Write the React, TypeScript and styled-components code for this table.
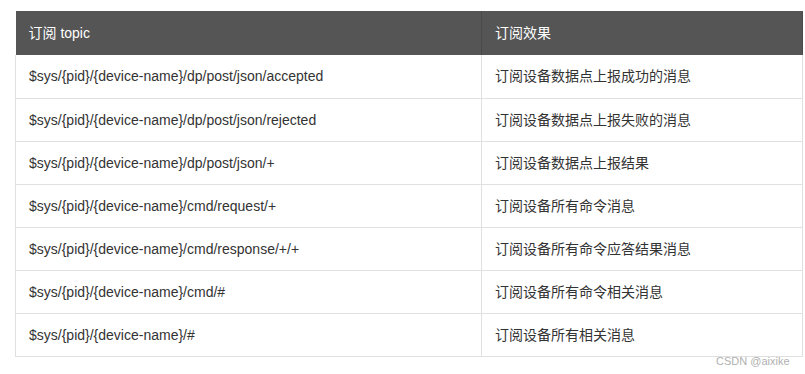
import styled, {createGlobalStyle} from "styled-components";

const GlobalStyle = createGlobalStyle`
  body {
    margin: 0;
    background: #fff;
    font-family: "Liberation Sans", "Noto Sans CJK SC", sans-serif;
  }
`;

const Page = styled.div`
  position: relative;
  padding: 11px 0 0 15px;
  height: 374px;
  box-sizing: border-box;
`;

const Table = styled.table`
  width: 788px;
  border-collapse: collapse;
  table-layout: fixed;
  font-size: 14px;
  line-height: 20px;
`;

const HeadCell = styled.th<{ $w?: number }>`
  width: ${props => props.$w ? `${props.$w}px` : "auto"};
  height: 44px;
  padding: 0 13px;
  box-sizing: border-box;
  background: #555555;
  color: #ffffff;
  font-weight: normal;
  text-align: left;
  border-right: 1px solid #4a4a4a;
`;

const Row = styled.tr`
  border-bottom: 1px solid #e0e0e0;
`;

const Cell = styled.td`
  height: 43px;
  padding: 0 13px;
  box-sizing: border-box;
  color: #333333;
  border-left: 1px solid #e0e0e0;
  border-right: 1px solid #e0e0e0;
  white-space: nowrap;
`;

const Watermark = styled.span`
  position: absolute;
  left: 716px;
  top: 355px;
  font-size: 11px;
  color: #b0b0b0;
  font-family: "Liberation Sans", sans-serif;
`;

interface ITopic {
    topic: string,
    effect: string,
}

const topics: ITopic[] = [
    {topic: "$sys/{pid}/{device-name}/dp/post/json/accepted", effect: "订阅设备数据点上报成功的消息"},
    {topic: "$sys/{pid}/{device-name}/dp/post/json/rejected", effect: "订阅设备数据点上报失败的消息"},
    {topic: "$sys/{pid}/{device-name}/dp/post/json/+", effect: "订阅设备数据点上报结果"},
    {topic: "$sys/{pid}/{device-name}/cmd/request/+", effect: "订阅设备所有命令消息"},
    {topic: "$sys/{pid}/{device-name}/cmd/response/+/+", effect: "订阅设备所有命令应答结果消息"},
    {topic: "$sys/{pid}/{device-name}/cmd/#", effect: "订阅设备所有命令相关消息"},
    {topic: "$sys/{pid}/{device-name}/#", effect: "订阅设备所有相关消息"},
];

function App() {
    return (
        <Page>
            <GlobalStyle/>
            <Table>
                <thead>
                <tr>
                    <HeadCell $w={466}>订阅 topic</HeadCell>
                    <HeadCell>订阅效果</HeadCell>
                </tr>
                </thead>
                <tbody>
                {topics.map(t =>
                    <Row key={t.topic}>
                        <Cell>{t.topic}</Cell>
                        <Cell>{t.effect}</Cell>
                    </Row>
                )}
                </tbody>
            </Table>
            <Watermark>CSDN @aixike</Watermark>
        </Page>
    );
}

export default App;
